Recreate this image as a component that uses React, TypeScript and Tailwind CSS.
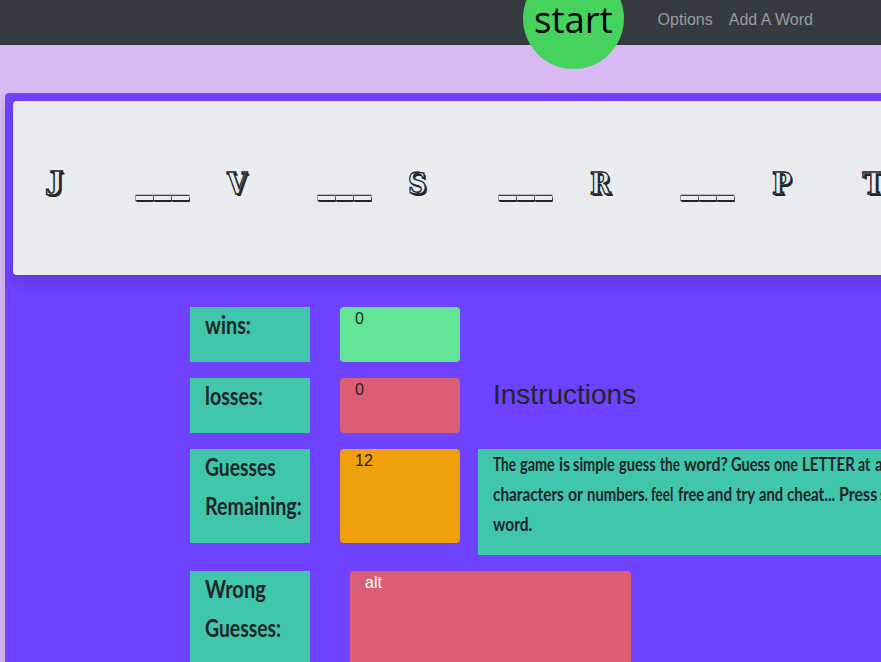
import { useLayoutEffect, useRef, useState } from "react";
import type { ReactNode } from "react";

/** Condenses or widens a run of text so that it takes a given width. */
function Fit({ text, width }: { text: string; width: number }) {
  const ref = useRef<HTMLSpanElement>(null);
  const [scale, setScale] = useState(1);
  useLayoutEffect(() => {
    if (ref.current && ref.current.offsetWidth) setScale(width / ref.current.offsetWidth);
  }, [width, text]);
  return (
    <span className="block shrink-0" style={{ width }}>
      <span ref={ref} className="inline-block origin-left whitespace-nowrap" style={{ transform: `scaleX(${scale})` }}>
        {text}
      </span>
    </span>
  );
}

function Label({ lines }: { lines: [string, number][] }) {
  return (
    <div className="w-[120px] shrink-0 self-start bg-[#3fc6ab] px-[15px] pb-[18px] font-['Lato'] text-[25px] leading-[39px] font-bold">
      <div className="-mt-0.5">
        {lines.map(([text, width]) => (
          <Fit key={text} text={text} width={width} />
        ))}
      </div>
    </div>
  );
}

function Row({ children, className }: { children: ReactNode; className: string }) {
  return <div className={`flex shrink-0 ${className}`}>{children}</div>;
}

const slots = ["J", "___", "V", "___", "S", "___", "R", "___", "P", "T"];
const glyphWidths: Record<string, number> = { J: 19, V: 20, S: 19, R: 21, P: 20, T: 22 };

const copy: [string, number][][] = [
  [["The", 23], ["game", 35], ["is", 11], ["simple", 42], ["guess", 37], ["the", 20], ["word?", 43.5], ["Guess", 39], ["one", 24], ["LETTER", 53], ["at", 12.5], ["a", 8], ["time.", 32]],
  [["characters", 71], ["or", 15], ["numbers.", 61], ["feel", 22.5], ["free", 26], ["and", 25], ["try", 19], ["and", 24], ["cheat...", 48], ["Press", 38], ["start", 32]],
  [["word.", 39]],
];

export default function App() {
  return (
    <div className="h-[662px] w-[881px] overflow-hidden bg-[#d9baf5] font-['Liberation_Sans',sans-serif] text-base leading-6 text-[#212529]">
      <nav className="flex h-[45px] items-start bg-[#343a40] pl-[523px] text-[#999c9f]">
        <button className="relative -mt-[32px] flex h-[101px] w-[101px] shrink-0 items-center justify-center rounded-full bg-[#45d25d] font-['Open_Sans'] text-[37px] leading-[48px] text-black">
          <Fit text="start" width={79} />
        </button>
        <a className="mt-2 ml-[33.6px]">Options</a>
        <a className="mt-2 ml-4">Add A Word</a>
      </nav>

      <main className="mt-12 ml-[5px] flex h-[700px] w-[1100px] flex-col rounded-[4px] bg-[#6f42ff] p-2 shadow-[0_8px_16px_rgba(0,0,0,0.12)]">
        <section className="flex h-[174px] shrink-0 items-center rounded-[4px] bg-[#e9ecef] pl-[32px] shadow-[0_8px_16px_rgba(0,0,0,0.15)]">
          {slots.map((slot, i) => (
            <div key={i} className="h-10 w-[90.85px] shrink-0">
              {slot === "___" ? (
                <div className="-mt-0.5 flex gap-px font-['Liberation_Mono'] text-[88px] leading-[4px] text-[#e9ecef] [-webkit-text-stroke:2.4px_#212529] [paint-order:stroke] [text-shadow:1px_1px_0_#212529,2px_2px_0_#212529]">
                  {slot.split("").map((dash, j) => (
                    <Fit key={j} text={dash} width={17} />
                  ))}
                </div>
              ) : slot === "J" ? (
                <div className="-mt-1 font-['Liberation_Serif'] text-[35px] leading-[40px] font-bold text-[#e9ecef] [-webkit-text-stroke:1.4px_#212529] [text-shadow:1px_1px_0_#212529,2px_2px_0_#212529]">
                  <Fit text={slot} width={glyphWidths[slot]} />
                </div>
              ) : (
                <div className="-mt-1 font-['DejaVu_Serif'] text-[30px] leading-[40px] font-bold text-[#e9ecef] [-webkit-text-stroke:1.4px_#212529] [text-shadow:1px_1px_0_#212529,2px_2px_0_#212529]">
                  <Fit text={slot} width={glyphWidths[slot]} />
                </div>
              )}
            </div>
          ))}
        </section>

        <section className="mt-8 flex flex-col gap-4 pl-[177px]">
          <Row className="h-[55px]">
            <Label lines={[["wins:", 46]]} />
            <div className="ml-[30px] w-[120px] rounded-[4px] bg-[#64e496] px-[15px]">0</div>
          </Row>
          <Row className="h-[55px]">
            <Label lines={[["losses:", 57.5]]} />
            <div className="ml-[30px] w-[120px] rounded-[4px] bg-[#db5e74] px-[15px]">0</div>
            <h3 className="ml-[33px] text-[28px] leading-[34px]">Instructions</h3>
          </Row>
          <Row className="h-[106px]">
            <Label lines={[["Guesses", 71], ["Remaining:", 97]]} />
            <div className="ml-[30px] h-[94px] w-[120px] rounded-[4px] bg-[#f0a00c] px-[15px]">12</div>
            <div className="ml-[18px] w-[560px] bg-[#3fc6ab] px-[15px] font-['Lato'] text-[19px] leading-[30px] font-bold">
              {copy.map((line, i) => (
                <p key={i} className="flex gap-[3.8px]">
                  {line.map(([word, width], j) => (
                    <Fit key={j} text={word} width={width} />
                  ))}
                </p>
              ))}
            </div>
          </Row>
          <Row className="h-[150px]">
            <Label lines={[["Wrong", 61], ["Guesses:", 76]]} />
            <div className="ml-10 w-[281px] rounded-[4px] bg-[#db5e74] px-[15px] text-white">alt</div>
          </Row>
        </section>
      </main>
    </div>
  );
}
